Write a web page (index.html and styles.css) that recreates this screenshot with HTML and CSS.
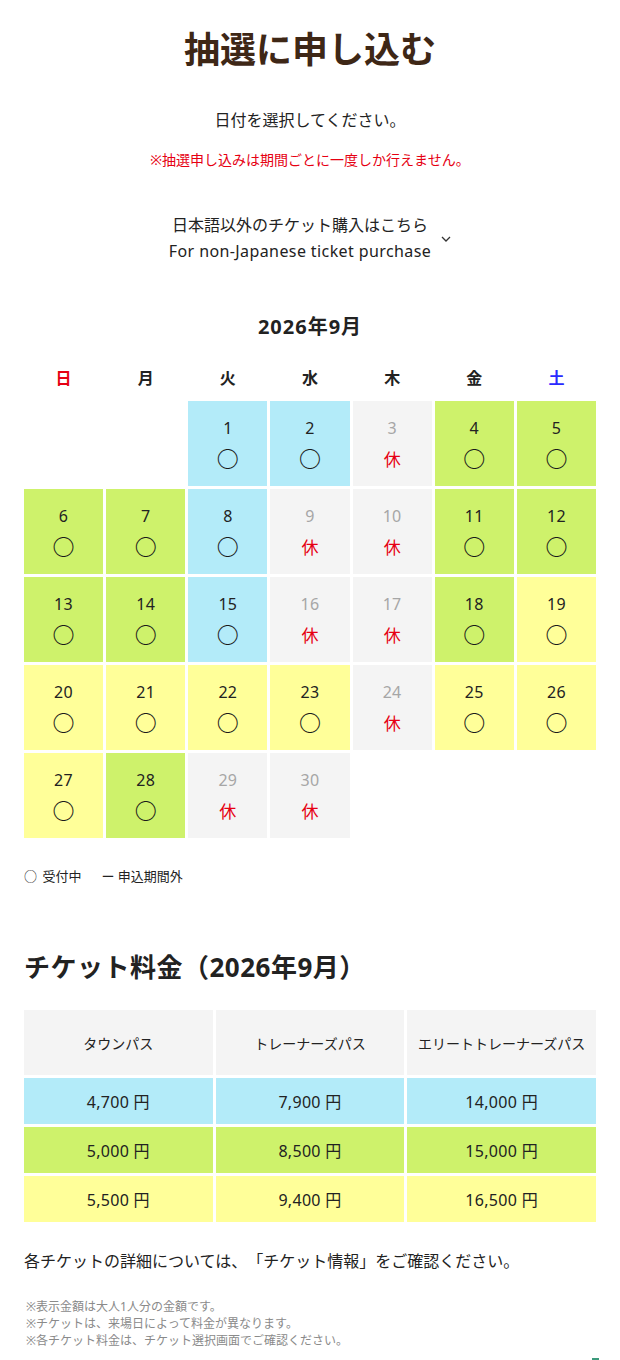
FILE: index.html
```html
<!DOCTYPE html>
<html lang="ja">
<head>
<meta charset="utf-8">
<title>抽選に申し込む</title>
<link rel="stylesheet" href="styles.css">
</head>
<body>
<main class="page">
  <h1 class="title">抽選に申し込む</h1>
  <p class="lead">日付を選択してください。</p>
  <p class="notice">※抽選申し込みは期間ごとに一度しか行えません。</p>

  <div class="lang">
    <div class="lang-text">
      <span>日本語以外のチケット購入はこちら</span>
      <span class="en">For non-Japanese ticket purchase</span>
    </div>
    <svg class="chev" width="10" height="6" viewBox="0 0 10 6"><polyline points="1,1 5,5 9,1" fill="none" stroke="#333" stroke-width="1.3"/></svg>
  </div>

  <h2 class="month">2026年9月</h2>

  <div class="week">
    <div class="wd sun">日</div><div class="wd">月</div><div class="wd">火</div><div class="wd">水</div><div class="wd">木</div><div class="wd">金</div><div class="wd sat">土</div>
  </div>

  <div class="cal">
    <div class="day empty"></div>
    <div class="day empty"></div>
    <div class="day blue"><span class="num">1</span><span class="mark">○</span></div>
    <div class="day blue"><span class="num">2</span><span class="mark">○</span></div>
    <div class="day off"><span class="num">3</span><span class="rest">休</span></div>
    <div class="day green"><span class="num">4</span><span class="mark">○</span></div>
    <div class="day green"><span class="num">5</span><span class="mark">○</span></div>

    <div class="day green"><span class="num">6</span><span class="mark">○</span></div>
    <div class="day green"><span class="num">7</span><span class="mark">○</span></div>
    <div class="day blue"><span class="num">8</span><span class="mark">○</span></div>
    <div class="day off"><span class="num">9</span><span class="rest">休</span></div>
    <div class="day off"><span class="num">10</span><span class="rest">休</span></div>
    <div class="day green"><span class="num">11</span><span class="mark">○</span></div>
    <div class="day green"><span class="num">12</span><span class="mark">○</span></div>

    <div class="day green"><span class="num">13</span><span class="mark">○</span></div>
    <div class="day green"><span class="num">14</span><span class="mark">○</span></div>
    <div class="day blue"><span class="num">15</span><span class="mark">○</span></div>
    <div class="day off"><span class="num">16</span><span class="rest">休</span></div>
    <div class="day off"><span class="num">17</span><span class="rest">休</span></div>
    <div class="day green"><span class="num">18</span><span class="mark">○</span></div>
    <div class="day yellow"><span class="num">19</span><span class="mark">○</span></div>

    <div class="day yellow"><span class="num">20</span><span class="mark">○</span></div>
    <div class="day yellow"><span class="num">21</span><span class="mark">○</span></div>
    <div class="day yellow"><span class="num">22</span><span class="mark">○</span></div>
    <div class="day yellow"><span class="num">23</span><span class="mark">○</span></div>
    <div class="day off"><span class="num">24</span><span class="rest">休</span></div>
    <div class="day yellow"><span class="num">25</span><span class="mark">○</span></div>
    <div class="day yellow"><span class="num">26</span><span class="mark">○</span></div>

    <div class="day yellow"><span class="num">27</span><span class="mark">○</span></div>
    <div class="day green"><span class="num">28</span><span class="mark">○</span></div>
    <div class="day off"><span class="num">29</span><span class="rest">休</span></div>
    <div class="day off"><span class="num">30</span><span class="rest">休</span></div>
  </div>

  <p class="legend"><span class="lg-mark">○</span> 受付中<span class="lg-gap"></span>ー 申込期間外</p>

  <h2 class="price-title">チケット料金（2026年9月）</h2>

  <div class="price">
    <div class="ph">タウンパス</div>
    <div class="ph">トレーナーズパス</div>
    <div class="ph">エリートトレーナーズパス</div>
    <div class="pc blue">4,700 円</div>
    <div class="pc blue">7,900 円</div>
    <div class="pc blue">14,000 円</div>
    <div class="pc green">5,000 円</div>
    <div class="pc green">8,500 円</div>
    <div class="pc green">15,000 円</div>
    <div class="pc yellow">5,500 円</div>
    <div class="pc yellow">9,400 円</div>
    <div class="pc yellow">16,500 円</div>
  </div>

  <p class="detail">各チケットの詳細については、「チケット情報」をご確認ください。</p>

  <ul class="notes">
    <li>※表示金額は大人1人分の金額です。</li>
    <li>※チケットは、来場日によって料金が異なります。</li>
    <li>※各チケット料金は、チケット選択画面でご確認ください。</li>
  </ul>
</main>
<div class="pagetop"></div>
</body>
</html>
```

FILE: styles.css
```css
* { box-sizing: border-box; }
html, body { margin: 0; padding: 0; background: #fff; }
body {
  font-family: "Noto Sans", "Noto Sans CJK JP", sans-serif;
  color: #333;
  text-spacing-trim: space-all;
}
.page { padding: 25px 24px 0; }

.title {
  margin: 0;
  text-align: center;
  font-size: 36px;
  line-height: 50px;
  font-weight: 700;
  color: #3e2716;
}
.lead {
  margin: 33px 0 0;
  text-align: center;
  font-size: 16px;
  line-height: 24px;
  color: #222;
}
.notice {
  margin: 18px 0 0;
  text-align: center;
  font-size: 14px;
  line-height: 20px;
  color: #e60012;
}
.lang {
  margin: 42px 0 0;
  display: flex;
  justify-content: center;
  align-items: center;
  gap: 10px;
}
.lang-text {
  display: flex;
  flex-direction: column;
  align-items: center;
  font-size: 16px;
  line-height: 26px;
  color: #222;
}
.lang-text .en { letter-spacing: 0.4px; }
.chev { margin-top: 2px; }

.month {
  margin: 49px 0 0;
  text-align: center;
  font-size: 20px;
  line-height: 28px;
  font-weight: 700;
  letter-spacing: 1px;
  color: #222;
}

.week {
  margin: 22px 0 8px;
  display: grid;
  grid-template-columns: repeat(7, 1fr);
  gap: 3px;
}
.wd {
  text-align: center;
  font-size: 16px;
  line-height: 30px;
  font-weight: 700;
  color: #222;
}
.wd.sun { color: #e60012; }
.wd.sat { color: #2a2aff; }

.cal {
  display: grid;
  grid-template-columns: repeat(7, 1fr);
  grid-auto-rows: 85px;
  gap: 3px;
}
.day {
  display: flex;
  flex-direction: column;
  align-items: center;
  padding-top: 16px;
}
.day.empty { background: transparent; }
.blue { background: #b3ebf9; }
.green { background: #cef26b; }
.yellow { background: #ffff99; }
.day.off { background: #f4f4f4; }
.num {
  font-size: 16px;
  line-height: 22px;
  color: #222;
  letter-spacing: 0.3px;
}
.off .num { color: #a6a6a6; }
.mark {
  margin-top: 2px;
  height: 34px;
  font-size: 22px;
  line-height: 34px;
  font-weight: 700;
  color: #1a1a1a;
}
.rest {
  margin-top: 4px;
  height: 34px;
  font-size: 17px;
  line-height: 34px;
  color: #e60012;
}

.legend {
  margin: 28px 0 0;
  font-size: 13px;
  line-height: 20px;
  color: #222;
}
.lg-mark { font-size: 13px; margin-right: 2px; }
.lg-gap { display: inline-block; width: 20px; }

.price-title {
  margin: 63px 0 0;
  font-size: 26px;
  line-height: 36px;
  font-weight: 700;
  letter-spacing: 0.5px;
  color: #222;
}

.price {
  margin-top: 25px;
  display: grid;
  grid-template-columns: repeat(3, 1fr);
  grid-template-rows: 65px 46px 46px 46px;
  gap: 3px;
}
.ph, .pc {
  display: flex;
  align-items: center;
  justify-content: center;
  color: #222;
}
.ph { background: #f4f4f4; font-size: 14px; }
.pc { font-size: 16px; letter-spacing: 0.3px; }

.detail {
  margin: 27px 0 0;
  font-size: 16px;
  line-height: 24px;
  color: #222;
}
.notes {
  margin: 25px 0 0;
  padding: 0 0 0 2px;
  list-style: none;
  font-size: 12px;
  line-height: 17px;
  color: #8a8a8a;
}

.pagetop {
  position: fixed;
  left: 592px;
  top: 1358px;
  width: 7px;
  height: 2px;
  background: #3c9a7c;
}
```
